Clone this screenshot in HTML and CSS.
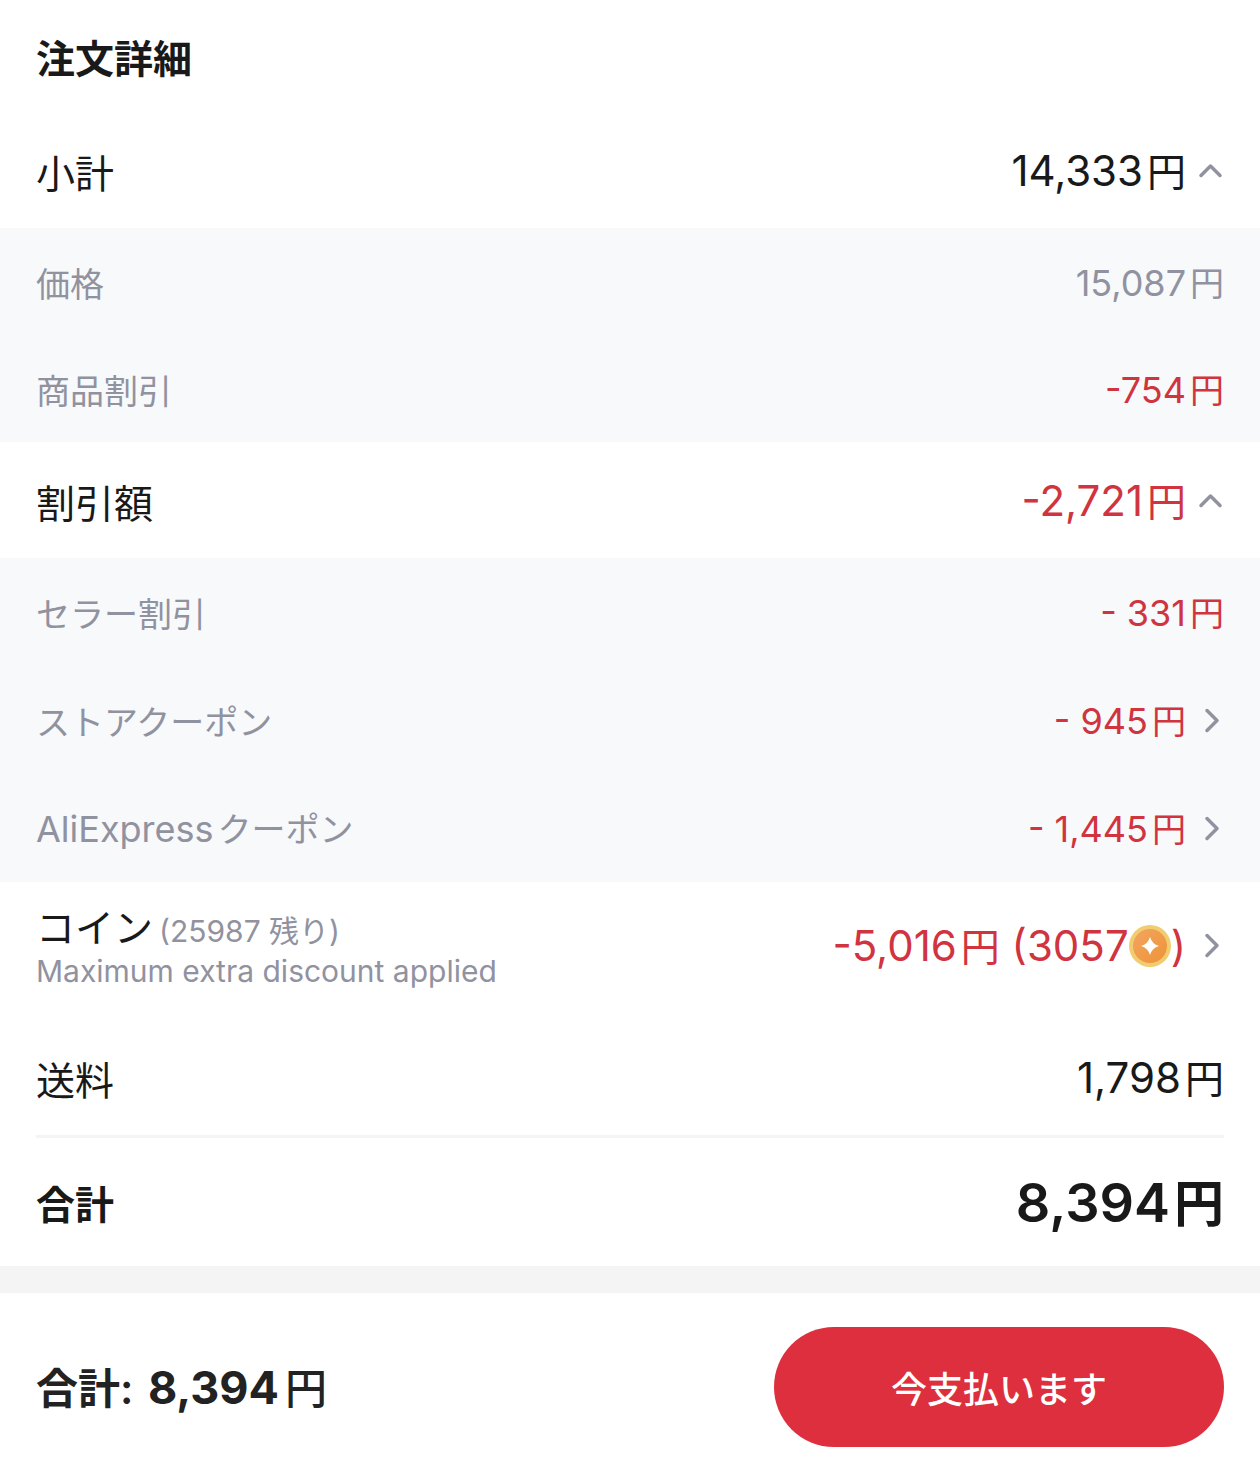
FILE: index.html
```
<!DOCTYPE html>
<html lang="ja">
<head>
  <meta charset="UTF-8" />
  <meta name="viewport" content="width=device-width, initial-scale=1" />
  <title>注文詳細</title>
  <link rel="stylesheet" href="styles.css">
</head>
<body>
  <main class="order">
    <h1 class="title">注文詳細</h1>

    <!-- Subtotal -->
    <button type="button" class="row" aria-expanded="true">
      <span class="label">小計</span>
      <span class="amount">14,333<span class="yen">円</span></span>
      <svg class="icon" viewBox="0 0 26 26" aria-hidden="true"><path d="M3 17.5 12.5 8 22 17.5" /></svg>
    </button>
    <div class="details price-details">
      <div class="row">
        <span class="label">価格</span>
        <span class="amount">15,087<span class="yen">円</span></span>
      </div>
      <div class="row">
        <span class="label">商品割引</span>
        <span class="amount discount">-754<span class="yen">円</span></span>
      </div>
    </div>

    <!-- Discounts -->
    <button type="button" class="row" aria-expanded="true">
      <span class="label">割引額</span>
      <span class="amount discount">-2,721<span class="yen">円</span></span>
      <svg class="icon" viewBox="0 0 26 26" aria-hidden="true"><path d="M3 17.5 12.5 8 22 17.5" /></svg>
    </button>
    <div class="details">
      <div class="row">
        <span class="label">セラー割引</span>
        <span class="amount discount">- 331<span class="yen">円</span></span>
      </div>
      <button type="button" class="row">
        <span class="label">ストアクーポン</span>
        <span class="amount discount">- 945<span class="yen">円</span></span>
        <svg class="icon" viewBox="0 0 26 26" aria-hidden="true"><path d="M9 2.5 19 12.5 9 22.5" /></svg>
      </button>
      <button type="button" class="row">
        <span class="label"><span class="latin">AliExpress</span>クーポン</span>
        <span class="amount discount">- 1,445<span class="yen">円</span></span>
        <svg class="icon" viewBox="0 0 26 26" aria-hidden="true"><path d="M9 2.5 19 12.5 9 22.5" /></svg>
      </button>
    </div>

    <!-- Coins -->
    <button type="button" class="row coins">
      <span class="coin-text">
        <span class="label">コイン<small class="note">(25987 残り)</small></span>
        <span class="note">Maximum extra discount applied</span>
      </span>
      <span class="amount discount coin-amount">
        <span>-5,016<span class="yen">円</span> (3057</span>
        <svg class="coin" viewBox="0 0 42 42" aria-hidden="true">
          <defs>
            <linearGradient id="coinFill" x1="0" y1="0" x2="1" y2="1">
              <stop offset="0" stop-color="#f3a55f" />
              <stop offset="1" stop-color="#ee9338" />
            </linearGradient>
          </defs>
          <circle cx="21" cy="21" r="21" fill="#f0cd70" />
          <circle cx="21" cy="21" r="17" fill="url(#coinFill)" />
          <path fill="#fff" d="M21 12q2 7 9 9-7 2-9 9-2-7-9-9 7-2 9-9z" />
        </svg>
        <span>)</span>
      </span>
      <svg class="icon" viewBox="0 0 26 26" aria-hidden="true"><path d="M9 2.5 19 12.5 9 22.5" /></svg>
    </button>

    <!-- Shipping -->
    <div class="row">
      <span class="label">送料</span>
      <span class="amount">1,798<span class="yen">円</span></span>
    </div>

    <div class="row total">
      <span class="label">合計</span>
      <span class="amount">8,394<span class="yen">円</span></span>
    </div>
  </main>

  <footer class="pay-bar">
    <span class="pay-total">合計: <span class="amount">8,394<span class="yen">円</span></span></span>
    <button type="button" class="pay-button">今支払います</button>
  </footer>
</body>
</html>
```

FILE: styles.css
```
* {
  box-sizing: border-box;
}

body {
  margin: 0;
  background: #fff;
  color: #191919;
  font-family: "Noto Sans CJK JP", sans-serif;
  font-size: 39px;
  line-height: 1;
}

button {
  border: none;
  background: none;
  color: inherit;
  font: inherit;
  text-align: left;
  cursor: pointer;
}

.title {
  display: flex;
  align-items: center;
  min-height: 112px;
  margin: 0;
  padding: 0 36px;
  font-size: 39px;
  font-weight: 700;
}

.row {
  display: flex;
  align-items: center;
  width: 100%;
  min-height: 116px;
  padding: 2px 36px 0;
}

.label {
  flex: 1;
}

.amount {
  font-family: Inter, "Noto Sans CJK JP", sans-serif;
  font-size: 42px;
  white-space: nowrap;
}

.yen {
  margin-left: 4px;
  font-family: "Noto Sans CJK JP", sans-serif;
  font-size: 39px;
}

.discount {
  color: #d0343f;
}

.icon {
  width: 26px;
  height: 26px;
  margin-left: 12px;
  fill: none;
  stroke: #9192a0;
  stroke-width: 3.5;
  stroke-linecap: round;
  stroke-linejoin: round;
}

/* grey blocks under an expanded row */
.details {
  background: #f7f9fb;
  color: #9192a0;
  font-size: 34px;
}

.details .row {
  min-height: 108px;
}

.price-details .row {
  min-height: 107px;
}

.details .amount {
  font-size: 36px;
}

.details .yen {
  font-size: 34px;
}

.latin {
  margin-right: 4px;
  font-family: Inter, sans-serif;
  font-size: 36px;
}

.coins {
  min-height: 137px;
  padding-top: 0;
  padding-bottom: 10px;
}

.coin-text {
  display: flex;
  flex: 1;
  flex-direction: column;
  gap: 10px;
}

.note {
  color: #9192a0;
  font-family: Inter, "Noto Sans CJK JP", sans-serif;
  font-size: 30px;
}

.label .note {
  margin-left: 6px;
}

.coin-amount {
  display: flex;
  align-items: center;
}

.coin {
  width: 42px;
  height: 42px;
}

.total {
  min-height: 131px;
  padding-top: 4px;
  font-weight: 700;
  position: relative;
}

.total::before {
  content: "";
  position: absolute;
  top: 0;
  left: 36px;
  right: 36px;
  height: 3px;
  background: #f4f4f4;
}

.total .amount {
  font-size: 54px;
  font-weight: 600;
}

.total .yen {
  font-size: 50px;
}

.pay-bar {
  display: flex;
  align-items: center;
  justify-content: space-between;
  padding: 34px 36px 36px;
  border-top: 27px solid #f4f4f4;
}

.pay-total {
  color: #222;
  font-family: Inter, "Noto Sans CJK JP", sans-serif;
  font-size: 42px;
  font-weight: 600;
}

.pay-total .amount {
  margin-left: 4px;
  font-size: 45px;
  font-weight: 700;
}

.pay-total .yen {
  margin-left: 6px;
  font-size: 42px;
  font-weight: 500;
}

.pay-button {
  min-width: 450px;
  min-height: 120px;
  border-radius: 60px;
  background: #dd2f3d;
  color: #fff;
  font-size: 36px;
  font-weight: 500;
  text-align: center;
}
```
